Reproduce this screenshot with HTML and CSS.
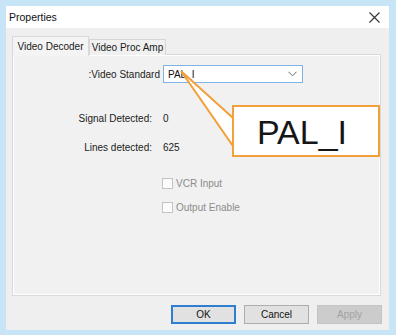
FILE: index.html
```html
<!DOCTYPE html>
<html>
<head>
<meta charset="utf-8">
<link rel="stylesheet" href="styles.css">
</head>
<body>
<div class="window">
  <div class="titlebar">
    <span class="title">Properties</span>
    <svg class="close" width="11" height="11" viewBox="0 0 11 11"><path d="M0.5 0.5 L10.5 10.5 M10.5 0.5 L0.5 10.5" stroke="#333" stroke-width="1.1" fill="none"/></svg>
  </div>
  <div class="content">
    <div class="tabs">
      <div class="tab active">Video Decoder</div>
      <div class="tab">Video Proc Amp</div>
    </div>
    <div class="panel">
      <div class="row row-std">
        <span class="lbl lbl-std">:Video Standard</span>
        <div class="combo"><span>PAL_I</span>
          <svg width="9" height="6" viewBox="0 0 9 6"><path d="M0.5 0.8 L4.5 4.8 L8.5 0.8" stroke="#666" stroke-width="1" fill="none"/></svg>
        </div>
      </div>
      <div class="row row-signal">
        <span class="lbl">Signal Detected:</span><span class="val">0</span>
      </div>
      <div class="row row-lines">
        <span class="lbl">Lines detected:</span><span class="val">625</span>
      </div>
      <div class="check row-vcr"><span class="box"></span><span class="clbl">VCR Input</span></div>
      <div class="check row-out"><span class="box"></span><span class="clbl">Output Enable</span></div>
    </div>
    <div class="buttons">
      <div class="btn default">OK</div>
      <div class="btn">Cancel</div>
      <div class="btn disabled">Apply</div>
    </div>
  </div>
  <svg class="pointer" width="383" height="324" viewBox="0 0 383 324">
    <polygon points="175,65 227,112 227,140" fill="#ffffff" stroke="#f2a03a" stroke-width="2" stroke-linejoin="miter"/>
  </svg>
  <div class="callout">PAL_I</div>
</div>
</body>
</html>
```

FILE: styles.css
```css
html, body {
  margin: 0;
  padding: 0;
}
body {
  width: 396px;
  height: 335px;
  background: #c8e5f8;
  font-family: "Liberation Sans", Arial, sans-serif;
  font-size: 10px;
  color: #222;
  overflow: hidden;
}
.window {
  position: relative;
  margin: 6px 0 0 6px;
  width: 383px;
  height: 324px;
  background: #efefef;
  display: flex;
  flex-direction: column;
}
.titlebar {
  height: 22px;
  background: #ffffff;
  display: flex;
  align-items: center;
  justify-content: space-between;
  padding: 0 9px 0 3px;
  flex: none;
}
.title {
  font-size: 10.5px;
  color: #111;
}
.close {
  display: block;
}
.content {
  padding: 8px 8px 0 6px;
  display: flex;
  flex-direction: column;
}
.tabs {
  display: flex;
  align-items: flex-end;
  height: 19px;
  position: relative;
  z-index: 1;
}
.tab {
  box-sizing: border-box;
  height: 16px;
  width: 77px;
  border: 1px solid #d6d6d6;
  border-bottom: none;
  background: #f0f0f0;
  display: flex;
  align-items: center;
  justify-content: center;
  color: #1a1a1a;
}
.tab.active {
  width: 77px;
  background: #f4f4f4;
  border-color: #dadada;
  padding-bottom: 1px;
  margin-bottom: -1px;
  height: 20px;
}
.panel {
  box-sizing: border-box;
  height: 242px;
  margin-top: -1px;
  border: 1px solid #d9d9d9;
  box-shadow: inset 1px 1px 0 #ffffff, inset -1px -1px 0 #ffffff;
  background: #f1f1f1;
  padding-top: 10px;
  display: flex;
  flex-direction: column;
}
.row {
  display: flex;
  align-items: center;
  height: 14px;
}
.lbl {
  width: 139px;
  text-align: right;
  flex: none;
}
.val {
  margin-left: 11px;
}
.row-std {
  height: 18px;
}
.lbl-std {
  width: 147px;
}
.combo {
  box-sizing: border-box;
  margin-left: 3px;
  width: 140px;
  height: 18px;
  background: #ffffff;
  border: 1px solid #7fb2e5;
  display: flex;
  align-items: center;
  justify-content: space-between;
  padding: 0 5px 0 4px;
  color: #111;
}
.row-signal {
  margin-top: 28px;
}
.row-lines {
  margin-top: 15px;
}
.check {
  display: flex;
  align-items: center;
  height: 14px;
  padding-left: 149px;
  color: #8c8c8c;
}
.box {
  box-sizing: border-box;
  width: 11px;
  height: 11px;
  border: 1px solid #c4c4c4;
  background: #fbfbfb;
  margin-right: 3px;
}
.row-vcr {
  margin-top: 22px;
}
.row-out {
  margin-top: 10px;
}
.buttons {
  display: flex;
  justify-content: flex-end;
  gap: 8px;
  margin-top: 9px;
  margin-right: -1px;
}
.btn {
  box-sizing: border-box;
  width: 65px;
  height: 19px;
  background: #e1e1e1;
  border: 1px solid #adadad;
  display: flex;
  align-items: center;
  justify-content: center;
  color: #111;
}
.btn.default {
  border: 2px solid #2f7fd0;
}
.btn.disabled {
  background: #cccccc;
  border-color: #c4c4c4;
  color: #a2a2a2;
}
.pointer {
  position: absolute;
  left: 0;
  top: 0;
  pointer-events: none;
  z-index: 2;
}
.callout {
  position: absolute;
  left: 226px;
  top: 99px;
  width: 148px;
  height: 52px;
  box-sizing: border-box;
  border: 2px solid #f2a03a;
  background: #ffffff;
  z-index: 3;
  display: flex;
  align-items: center;
  justify-content: center;
  padding: 3px 8px 0 0;
  font-size: 34px;
  color: #161616;
}
```
